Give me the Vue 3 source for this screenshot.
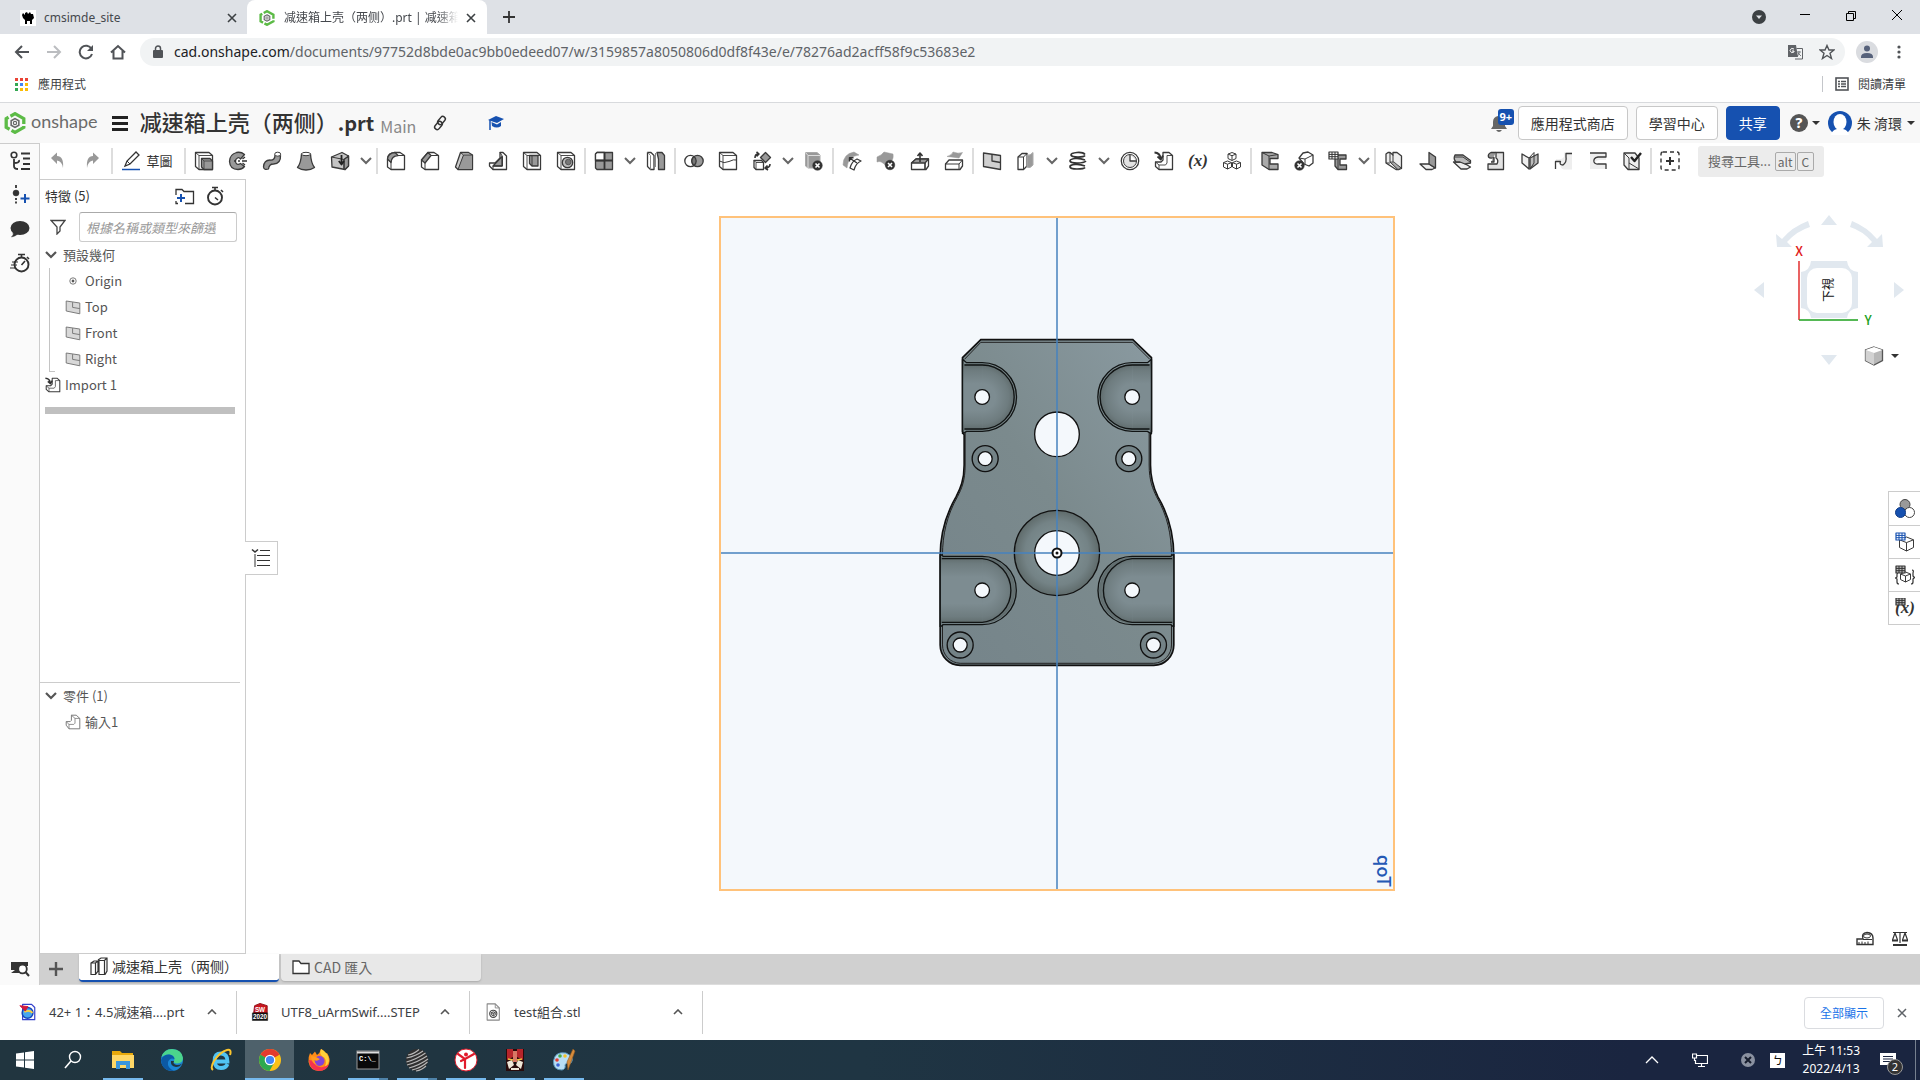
<script setup>
import { ref } from 'vue'

const K = '#3a3a3a'
const G = '#999'
const L = '#e2e2e2'
const p = (d, fill = 'none', stroke = K, w = 1.3) =>
  `<path d="${d}" fill="${fill}" stroke="${stroke}" stroke-width="${w}" stroke-linejoin="round"/>`
const c = (x, y, r, fill = 'none', stroke = K, w = 1.3) =>
  `<circle cx="${x}" cy="${y}" r="${r}" fill="${fill}" stroke="${stroke}" stroke-width="${w}"/>`
const block = p('M1.5 1.5H15L18.5 4.5V18.5H5L1.5 15.5Z', '#fff') + p('M1.5 1.5L5 4.5H18.5M5 4.5V18.5', 'none', K, 0.9)
const cross = (x, y) => c(x, y, 4.8, '#333', '#333', 0.5) + p(`M${x - 2} ${y - 2}L${x + 2} ${y + 2}M${x + 2} ${y - 2}L${x - 2} ${y + 2}`, 'none', '#fff', 1.6)
const grid = (x, y, s = '#333', f = '#fff') =>
  p(`M${x} ${y}h9v7h-9z`, f, s, 1.2) + p(`M${x + 3} ${y}v7M${x + 6} ${y}v7M${x} ${y + 2.4}h9M${x} ${y + 4.7}h9`, 'none', s, 1)
const cube = (x, y, s, f = '#fff') =>
  p(`M${x} ${y - s}l${s} ${s * 0.4}v${s * 1.1}l${-s} ${s * 0.5}l${-s} ${-s * 0.5}v${-s * 1.1}z`, f, K, 1) +
  p(`M${x - s} ${y - s * 0.6}l${s} ${s * 0.4}l${s} ${-s * 0.4}M${x} ${y - s * 0.2}v${s * 1.2}`, 'none', K, 1)

const plane = p('M1.5 2.5L18.5 5V18.5L1.5 15Z', '#d8d8d8', '#777', 1.2) + p('M9.5 4V10.5L18.5 12', 'none', '#777', 1.2)
const partIcon = p('M8 1.5L14 1.5L18.5 5.5V18.5H5L1.5 14V9.5H6.5L8 8Z', '#fff', '#777', 1.2) + p('M1.5 9.5L5 13H11L12.5 11.5V5.5L18.5 5.5M12.5 5.5L8 1.5M5 13V18.5', 'none', '#777', 1)
const varX = `<text x="10" y="15" text-anchor="middle" font-family="Liberation Serif, serif" font-style="italic" font-weight="700" font-size="17" fill="#333">(x)</text>`
const importIcon = p('M9 1.5H15L18.5 4.5V18.5H5L1.5 15.5V11H7L9 9Z', '#fff') + p('M1.5 11L5 14H11.5L13 12V4.5H18.5M5 14V18.5', 'none', K, 0.9) + p('M0.5 1.5Q6 2 6.5 7M3.5 5.5L6.8 8.5L9 4.5', 'none', '#333', 1.8)

const tools = [
  { n: 'Extrude', s: block + p('M7.5 7.5H16L18.5 10V18.5H10L7.5 16Z', G) + p('M7.5 7.5L10 10H18.5M10 10V18.5', 'none', K, 0.8) },
  { n: 'Revolve', s: p('M16.5 3.5Q13 0.5 8.5 1.5Q1.5 3.5 1.5 10.5Q2 18.5 10 18.5Q14 18.5 16.5 15.5L12.5 12.5Q9.5 14.5 8 12Q6.5 8.5 9.5 7Q11 6 12.5 8Z', G) + p('M6 10H8M10 10H12M14 10H19M14.5 8L17 6M14.5 12L17 14', 'none', '#333', 1.3) },
  { n: 'Sweep', s: p('M1.5 16Q2 9 8 9Q13 9.5 13 4L18.5 4.5Q19 12.5 11.5 13Q7 13 6.5 18Q2 19.5 1.5 16Z', G) + `<ellipse cx="15.7" cy="3.2" rx="3" ry="2" fill="#fff" stroke="${K}"/>` },
  { n: 'Loft', s: p('M5.5 3H14.5Q15 12 18.5 16.5Q15 19 10 19Q5 19 1.5 16.5Q5 12 5.5 3Z', G) + `<ellipse cx="10" cy="3" rx="4.5" ry="1.7" fill="#fff" stroke="${K}"/>` },
  { n: 'Thicken', chev: 1, s: p('M1.5 6L12 1.5L18.5 5V15L15 18.5L2 16Z', '#c4c4c4') + p('M14 8.5L18.5 5V15L15 18.5L14 18Z', G) + p('M1.5 6L14 8.5L18.5 5M14 8.5V18.5', 'none', K, 1) + p('M11.5 4V13M8.8 10L11.5 13.5L14 10', 'none', '#222', 1.8), sep: 1 },
  { n: 'Fillet', s: p('M1.5 8Q2 2 9 1.5H14L18.5 4.5V18.5H5L1.5 16Z', '#fff') + p('M1.5 8Q2 2 9 1.5L12 4.5Q5.5 5 5 11.5Z', G) + p('M12 4.5H18.5M5 11V18.5', 'none', K, 1) },
  { n: 'Chamfer', s: p('M1.5 9L8 1.5H14L18.5 4.5V18.5H5L1.5 16Z', '#fff') + p('M1.5 9L8 1.5L11 4.5L5 12Z', G) + p('M11 4.5H18.5M5 12V18.5', 'none', K, 1) },
  { n: 'Draft', s: p('M1.5 16L6.5 1.5H14.5L18.5 4V18.5H4Z', '#ccc') + p('M9.5 4H18.5V18.5H4Z', G, K, 1) + p('M6.5 1.5L9.5 4', 'none', K, 1) },
  { n: 'Rib', s: p('M12 1.5H15L18.5 5V18.5H5L1.5 15V12H7L12 7Z', '#fff') + p('M5 15L14 5.5V15Z', G) + p('M12 1.5L14.5 5.5V15H5V18.5', 'none', K, 1) },
  { n: 'Shell', s: block + p('M7.5 4.5H16V15H10L7.5 12.5Z', G) + p('M10 4.5V15', 'none', K, 1) },
  { n: 'Hole', s: block + c(11.5, 11.5, 5.2, '#bbb') + c(12.3, 11, 2.8, '#777', '#555', 1), sep: 1 },
  { n: 'Linear pattern', chev: 1, s: p('M3 1.5H18.5V18.5H3L1.5 17V3Z', G) + p('M3 1.5H10.5V9.5H1.5V3Z', '#fff') + p('M10.5 1.5V18.5M1.5 9.5H18.5', 'none', '#333', 1.8) },
  { n: 'Mirror', s: p('M1.5 1.5H5L8 4.5V18.5H4.5L1.5 15.5Z', '#fff') + p('M11 1.5H16L18.5 4.5V18.5H12.5V8Z', G) + p('M1.5 1.5L4.5 4.5V18.5M9.5 2V16', 'none', '#888', 1), sep: 1 },
  { n: 'Boolean', s: c(6.5, 10, 5.7, '#fff') + c(13.5, 10, 5.7, G) + p('M10 5.5A5.7 5.7 0 0 1 10 14.5A5.7 5.7 0 0 1 10 5.5', '#777') },
  { n: 'Split', s: block + p('M1.5 10Q6 13 11 10.5T18.5 9', 'none', K, 1) },
  { n: 'Transform', chev: 1, s: p('M2 9.5H9.5L11.5 11.5V18.5H4L2 16.5Z', '#fff') + p('M2 9.5L4 11.5H11.5M4 11.5V18.5', 'none', K, 0.9) + p('M8.5 6.5L13.5 1.5L18.5 6.5L13.5 11.5Z', G) + p('M3 7Q3 3 6 3M4.5 0.8L7 3L4.5 5.3M18 13Q18 16.5 14 17M15.5 14.5L13 17L16 19', 'none', '#333', 1.6) },
  { n: 'Delete part', s: p('M1.5 1.5H13L16 4V17H4L1.5 15Z', G, '#aaa', 1) + p('M1.5 1.5L4 4.5H16M4 4.5V17', 'none', '#ddd', 1) + cross(13.5, 14.5), sep: 1 },
  { n: 'Modify fillet', s: p('M1 14Q1 3 12 1L17 4Q6 5 5 17Z', G, G, 0.5) + p('M8 17Q10 10 15 8L19 10Q14 12 12 19Z', '#fff') + p('M15 12L7.5 7M7.5 10.5V6.8H11.5', 'none', '#333', 1.4) },
  { n: 'Delete face', s: p('M1 6Q6 4 8 1L17 3Q18 7 15 11L10 15Q5 9 1 11Z', G, G, 0.5) + cross(14, 14) },
  { n: 'Move face', s: p('M1.5 12L6 8H18.5V15L16 18.5H1.5Z', '#fff') + p('M1.5 12L6 8H18.5L15 12Z', G) + p('M15 12V18M10 11V3M7.5 5L10 2L12.5 5', 'none', '#333', 1.6) },
  { n: 'Replace face', s: p('M3 5.5Q8 4 9 1Q14 3 18.5 1.5L15 7Q9 6 3 5.5Z', G, G, 0.5) + p('M1.5 13L5 9H18.5V15L16 18.5H1.5Z', '#fff') + p('M1.5 13H15L18.5 9M15 13V18', 'none', K, 1), sep: 1 },
  { n: 'Plane', s: p('M1.5 2L18.5 4.5V18.5L1.5 15.5Z', '#d0d0d0') + p('M10 3V10L18.5 11.5', 'none', K, 1.3) },
  { n: 'Frame', chev: 1, s: p('M2 6L6 2.5H11V15L7.5 18.5H2Z', '#fff') + p('M2 6H7.5L11 2.5M7.5 6V18', 'none', K, 1) + p('M11 4Q14 5 17 1.5V14Q14 18 11 16Z', G, '#aaa', 1) },
  { n: 'Helix', chev: 1, s: p('M17 3.5Q15 1 9 1.5Q3 2 3 4Q3.5 6 10 6Q16 6 17 4.5M17 9Q12 7 7 7.5Q2 8 2 10Q2.5 12 9 12Q16 12 18 10M17 15Q12 13 7 13.5Q1.5 14 2 16Q2.5 18 9 18Q16 18 17 16.5', 'none', '#333', 1.7) },
  { n: 'Curve', s: c(10, 10, 8.7, '#fff') + c(10, 10, 6.5, L, K, 1) + p('M10 3.5V10H16.5', '#fff', K, 1.3) },
  { n: 'Import', s: importIcon },
  { n: 'Variable', s: varX },
  { n: 'Configurations', s: cube(10, 5.5, 4) + cube(5.5, 14, 4) + cube(14.5, 14, 4), sep: 1 },
  { n: 'Sheet metal', s: p('M2 1.5H12L18 3.5V7.5H10V13H18V18.5H9L2 14Z', '#aaa') + p('M2 1.5L9 5V18.5M9 5L18 3.5', 'none', K, 1) },
  { n: 'Remove bend', s: p('M5 7L9 2L14 1L19 4V12L15 15L10 13Z', '#fff') + p('M5 7L11 8L19 4M11 8V13', 'none', K, 1) + cross(5.5, 14.5) },
  { n: 'Sheet metal table', chev: 1, s: p('M7 4H18V8H12V14H18.5V18.5H10L7 15Z', G) + p('M10 7V18', 'none', K, 1) + grid(1, 1), sep: 1 },
  { n: 'Flange', s: p('M2 3L4 1.5H6L9 4V1.5H13L17.5 5V17.5L15 18.5H12L2 12Z', '#eee') + p('M6 1.5V11L14 18.5M9 4V11.5L17.5 17M2 12H6', 'none', K, 1) + p('M6 11H10L17 17L14 18.5Z', '#aaa', K, 0.8) },
  { n: 'Hem', s: p('M2 13H11L17 17L14 18.5H8Z', '#eee') + p('M11 1.5L17.5 6V17L11 13Z', G) },
  { n: 'Tab', s: p('M1.5 11H10L18.5 16L15 18H9Z', '#eee') + p('M3 4H11L18.5 9.5V12L13 13L8 11H4Q1 8 3 4Z', '#bbb') + p('M3 6H11L18 11', 'none', K, 1) },
  { n: 'Joint', s: p('M10 1.5H17.5V18.5H2V13H11Q13 9 10 7Z', L) + p('M10 1.5H5Q1.5 3 2.5 6Q4 8 8 6.5V11H5', G) },
  { n: 'Corner', s: p('M2 3L9 7V18L2 12Z', '#eee') + p('M18 3L10 7V18L18 12Z', '#bbb') + p('M9 7L14 1.5V12L10 18', 'none', K, 1) },
  { n: 'Bend relief', s: p('M10 1.5H18V18.5H10Q5 18 7 11H2V8Q8 9 10 6Z', '#eee', 'none') + p('M18 2.5H12V6Q13 11 9 14Q5 14 6.5 10.5H1.5V18', 'none') },
  { n: 'Make joint', s: p('M2 2H18V9H11Q6 10 7 14H18V18H2Z', '#eee', 'none') + p('M2 2H18V6H10Q5 7 6 11Q7 13.5 10 13H18V18', 'none') },
  { n: 'Finish sheet metal', s: p('M2 2H13L17 7V18.5H6L2 14Z', '#eee') + p('M2 2L7 7V18M7 12L17 18', 'none', K, 1) + p('M9 6L12.5 10L19 2', 'none', '#222', 2.4), sep: 1 },
]

const rail = [
  { n: 'Features', s: p('M4 8V15Q4 18 8 18M4 12Q10 12 9 9', 'none', '#333', 1.8) + c(4, 4, 2.8, '#fff', '#333', 1.6) + p('M11 2.5H20M13 7.5H20M13 13H20M11 18H20', 'none', '#333', 1.8) },
  { n: 'Insert version', s: c(6, 8, 3, '#333', '#333', 0.5) + p('M6 0V3M6 13V15M6 16.5V18.5', 'none', '#333', 1.8) + p('M15 9V18M10.5 13.5H19.5', 'none', '#1651b0', 2) },
  { n: 'Comments', s: `<ellipse cx="10" cy="9" rx="9.5" ry="7" fill="#333"/>` + p('M3 13Q4 16 1.5 18Q6 17 9 14Z', '#333', '#333', 0.5) },
  { n: 'History', s: c(11.5, 11.5, 7, '#fff', '#333', 1.9) + p('M8 1.5H15M11.5 1.5V4M17 4L19 6M11.5 12L15 8', 'none', '#333', 1.6) + p('M2 9H8M1 12H7M0 15H6', 'none', '#333', 1.2) },
]

const tree = [
  { t: 'Origin', s: c(10, 10, 4, 'none', '#777', 1.2) + c(10, 10, 1.5, '#555', '#555', 0.5) },
  { t: 'Top', s: plane }, { t: 'Front', s: plane }, { t: 'Right', s: plane },
]

const side = [
  { n: 'Appearance', s: c(10, 5.5, 5, '#999', '#444', 1) + c(14.5, 13.5, 5, '#fff', '#444', 1) + c(5.5, 13.5, 5, '#1651b0', '#123c85', 1) },
  { n: 'Part properties', s: cube(11.5, 12, 7) + grid(1, 1, '#1651b0') },
  { n: 'Configuration properties', s: cube(10.5, 12, 5) + p('M3 8Q2 8 2 10V12L0.5 13L2 14V17Q2 19 4 19M17 5Q19 5 18 8V11L19.5 12.5L18 14V17Q18 19 16 19', 'none', '#333', 1.2) + grid(1, 1, '#333', '#bbb') },
  { n: 'Variables', s: varX + grid(1, 0, '#333', '#bbb') },
]

const downloads = [
  { t: '42+ 1：4.5减速箱....prt', s: p('M4 1.5H14L17.5 5V18.5H4Z', '#fff', '#3340cc', 1.3) + c(9.5, 11, 6, '#48a6ed', '#1645b8', 1.6) + p('M6 10Q12 7 15 11', 'none', '#ffd23c', 2) + p('M1 3L10 4L7 9Z', '#d3183a', '#d3183a', 1) },
  { t: 'UTF8_uArmSwif....STEP', s: p('M4 3L10 0.5L18 3V11H3Z', '#c9151e', '#8f0d14', 1) + p('M1.5 11H18.5V19.5H1.5Z', '#111', '#111', 0.5) + '<text x="10" y="9.5" text-anchor="middle" font-family="Liberation Sans, sans-serif" font-weight="700" font-size="7" fill="#fff">SW</text><text x="10" y="18" text-anchor="middle" font-family="Liberation Sans, sans-serif" font-weight="700" font-size="7" fill="#fff">2020</text>' },
  { t: 'test組合.stl', s: p('M3.5 1H12.5L17 5.5V19H3.5Z', '#fff', '#888', 1.2) + p('M12.5 1V5.5H17', 'none', '#888', 1) + c(10.3, 12, 4, '#fff', '#444', 1.2) + cube(10.3, 12, 2.2) },
]

const tasks = [
  { n: 'Start', s: '<path d="M3 5.5L11 4.4V11.500H3ZM12 4.2L21 3V11.500H12ZM3 12.500H11V19.600L3 18.500ZM12 12.500H21V21L12 19.800Z" fill="#fff"/>' },
  { n: 'Search', s: '<circle cx="13" cy="9" r="5.5" fill="none" stroke="#fff" stroke-width="1.4"/><path d="M9 13L3 20" stroke="#fff" stroke-width="1.6"/>' },
  { n: 'File Explorer', on: 1, s: '<path d="M1 3H9L11 5H22V19H1Z" fill="#e8a90c"/><path d="M1 7H23V20H1Z" fill="#ffd766"/><path d="M5 21V13H19V21H15V17H9V21Z" fill="#3a96dd"/>' },
  { n: 'Edge', s: '<circle cx="12" cy="12" r="11" fill="#1b87d6"/><path d="M1.5 9Q4 1 12 1Q22 1.5 23 10Q23 15 17 15.5Q13 15 14 13Q16 8 10 6.5Q5 6 1.5 9Z" fill="#4bd48c"/><path d="M1 12Q3 6.5 9 6.5Q14 7 14.5 11Q10 9 8 14Q7 20 14 22.8Q2 24 1 12Z" fill="#0c59a4"/><path d="M14 13Q12 16 17 17Q20 17 22 15.5Q20 19 16 19Q10 18 11 13Z" fill="#21353f"/>' },
  { n: 'Internet Explorer', s: '<path d="M6 13.5H18.5Q18.5 5.5 12 5.5Q5.5 5.5 5.5 13Q6 20 12 20Q17 20 18.5 16" fill="none" stroke="#51c4f3" stroke-width="3.8"/><path d="M4 22Q1 20 5 13Q11 4 18 2Q23 1 21 7" fill="none" stroke="#fbc52d" stroke-width="2"/>' },
  { n: 'Chrome', on: 1, wide: 1, s: '<circle cx="12" cy="12" r="11" fill="#fbc116"/><path d="M12 12L2.5 6.5A11 11 0 0 1 21.5 6.5Z" fill="#e33b2e"/><path d="M12 12L2.5 6.5A11 11 0 0 0 11.5 23L16.5 14Z" fill="#2da94f"/><path d="M12 6.5H21.5L12 12L2.5 6.5Z" fill="#e33b2e"/><circle cx="12" cy="12" r="5.3" fill="#fff"/><circle cx="12" cy="12" r="4.1" fill="#4285f4"/>' },
  { n: 'Firefox', s: '<path d="M3 5L5 7L8 3.5L10 7Q13 5 14 1Q17 2 18 6L20 5Q24 11 22 16Q19 23 12 23Q3 22.5 1.5 14Q1 9 3 5Z" fill="#ff8a16"/><path d="M14 1Q22 5 22 13Q21 17 18 19Q21 11 15 8Q12 6 14 1Z" fill="#ffcf3a"/><path d="M2 12Q2 22 12 23Q20 23 22 16Q18 20 13 19Q7 18 7 13Z" fill="#f5334f"/><circle cx="12.5" cy="13" r="5" fill="#8143d8"/><path d="M4 8Q8 8 13 11Q10 14 7 12Q8 15 10 17Q4 15 4 8Z" fill="#ff9b20"/>' },
  { n: 'Command Prompt', on: 1, multi: 1, s: '<rect x="1" y="3" width="22" height="18" fill="#090909" stroke="#999"/><path d="M1 3.5H23V5.5H1Z" fill="#ddd"/><text x="3" y="13" font-family="Liberation Mono, monospace" font-size="7" font-weight="700" fill="#fff">C:\\_</text>' },
  { n: 'Globe', on: 1, multi: 1, s: '<circle cx="12" cy="12" r="11" fill="#303030"/><path d="M3 7Q9 6 14 1.5M1.5 10Q11 8 18 3M1.5 14Q12 11 20.500 5M2 17Q13 14 22 8M4 20Q15 17 23 11M7 22Q16 20 22.500 14M11 23Q17 22 21 18" fill="none" stroke="#b8b8b8" stroke-width="1.1"/>' },
  { n: 'Draft tool', on: 1, s: '<circle cx="12" cy="12" r="11" fill="#fff" stroke="#dd1d2c"/><path d="M4 6L11 11V20M20 6L11 11M11 11L7 13" stroke="#e11b2c" stroke-width="2.200" fill="none" stroke-linecap="round"/><circle cx="12" cy="6.5" r="2" fill="#e11b2c"/>' },
  { n: 'Lion', on: 1, s: '<path d="M3 1H21V23H3Z" fill="#280b0b"/><path d="M4 1H10V9L4 12ZM14 1H20V12L14 9Z" fill="#b6252b"/><path d="M10 3H14V15H10Z" fill="#d87764"/><path d="M4 14L9 12L11 17L6 21ZM20 14L15 12L13 17L18 21ZM8 20H16V22H8Z" fill="#eee6d7"/><path d="M5 11L10 12M19 11L14 12" stroke="#f2c341" stroke-width="1.5"/><path d="M10 14H14L12 17Z" fill="#111"/>' },
  { n: 'Paint', on: 1, s: '<path d="M14 5Q3 3 1.5 13Q1 22 10 22Q14 21 13 17Q14 14 18 16Q22 12 19 8Z" fill="#b9def5" stroke="#5b98bd"/><circle cx="5" cy="12" r="1.8" fill="#e23c30"/><circle cx="8" cy="8" r="1.8" fill="#4aa948"/><circle cx="13" cy="8" r="1.8" fill="#f4c028"/><circle cx="6" cy="17" r="1.8" fill="#3b62d5"/><path d="M21 1L23 3L19 14L16 22L15 14Z" fill="#d68b3c" stroke="#8f571d" stroke-width="0.6"/>' },
]

const filter = ref('')
const holes = [[185, 231, 22], [635, 231, 22], [185, 811, 22], [635, 811, 22]]
const bosses = [[194, 416], [625, 416], [119, 975], [699, 975]]
// Pocket: outer wall x, arc centre x, arc centre y
const pockets = [[126, 185, 231, 1], [693, 635, 231, 0], [60, 185, 811, 1], [760, 635, 811, 0]]
const onshapeMark = '<path d="M10 1.5L18 6V14L10 18.5L2 14V6Z" fill="none" stroke="#5cbb46" stroke-width="3" stroke-dasharray="14 2"/><path d="M10 6L13.5 8V12L10 14L6.5 12V8Z" fill="none" stroke="#666" stroke-width="1.4"/><circle cx="10" cy="10" r="1.5" fill="none" stroke="#666"/>'
</script>

<template>
  <div class="screen">
    <!-- Browser tab strip -->
    <div class="tabs">
      <div class="tab idle">
        <svg class="fav" viewBox="0 0 16 16"><rect width="16" height="16" fill="#fff" /><path d="M2 5L3 3L5 5V3L7 2L8 4L10 2L11 4H13L14 8L12 10V14H10V11H7V14H5V10L3 8Z" fill="#000" /></svg>
        <span class="tab-title">cmsimde_site</span>
        <button class="plain x" aria-label="Close tab"><svg viewBox="0 0 10 10"><path d="M1 1L9 9M9 1L1 9" stroke="#3c4043" stroke-width="1.6" /></svg></button>
      </div>
      <div class="tab active">
        <svg class="fav" viewBox="0 0 20 20" v-html="onshapeMark" />
        <span class="tab-title fade">减速箱上壳（两侧）.prt | 减速箱</span>
        <button class="plain x" aria-label="Close tab"><svg viewBox="0 0 10 10"><path d="M1 1L9 9M9 1L1 9" stroke="#3c4043" stroke-width="1.6" /></svg></button>
      </div>
      <button class="plain newtab" aria-label="New tab"><svg viewBox="0 0 14 14"><path d="M7 1V13M1 7H13" stroke="#333" stroke-width="1.8" /></svg></button>
      <div class="win">
        <button class="plain" aria-label="Search tabs"><svg viewBox="0 0 14 14"><circle cx="7" cy="7" r="7" fill="#3c4043" /><path d="M4 5.5H10L7 9Z" fill="#dee1e6" /></svg></button>
        <button class="plain" aria-label="Minimize"><svg viewBox="0 0 14 14"><path d="M2 4.5H12" stroke="#000" /></svg></button>
        <button class="plain" aria-label="Restore"><svg viewBox="0 0 14 14"><path d="M2.5 3.5H9.5V10.5H2.5ZM4.5 3V1.5H11.5V8.5H10" fill="none" stroke="#000" /></svg></button>
        <button class="plain" aria-label="Close"><svg viewBox="0 0 14 14"><path d="M2 0L12 10M12 0L2 10" stroke="#000" /></svg></button>
      </div>
    </div>

    <!-- Address bar -->
    <div class="nav">
      <button class="plain" aria-label="Back"><svg viewBox="0 0 16 16"><path d="M15 8H2M8 2L2 8L8 14" fill="none" stroke="#505357" stroke-width="2" /></svg></button>
      <button class="plain" aria-label="Forward"><svg viewBox="0 0 16 16"><path d="M1 8H14M8 2L14 8L8 14" fill="none" stroke="#bbbdc0" stroke-width="2" /></svg></button>
      <button class="plain" aria-label="Reload"><svg viewBox="0 0 16 16"><path d="M13.5 5A6.3 6.3 0 1 0 14 10" fill="none" stroke="#505357" stroke-width="2" /><path d="M15 1V7H9Z" fill="#505357" /></svg></button>
      <button class="plain" aria-label="Home"><svg viewBox="0 0 16 16"><path d="M1 8.5L8 2L15 8.5M3.5 7V14.5H12.5V7" fill="none" stroke="#505357" stroke-width="2" /></svg></button>
      <div class="omni">
        <svg class="lock" viewBox="0 0 12 14"><rect x="1" y="5" width="10" height="8" rx="1" fill="#505357" /><path d="M3.5 6V3.5A2.5 2.5 0 0 1 8.5 3.5V6" fill="none" stroke="#505357" stroke-width="1.5" /></svg>
        <a class="url" href="#"><b>cad.onshape.com</b>/documents/97752d8bde0ac9bb0edeed07/w/3159857a8050806d0df8f43e/e/78276ad2acff58f9c53683e2</a>
        <button class="plain" aria-label="Translate"><svg viewBox="0 0 16 16"><path d="M1 1H9L11 13H1Z" fill="#606367" /><path d="M9.5 4.5H15.5V15H8" fill="none" stroke="#606367" /><path d="M7 5Q4 3 3 6.5Q4 10 7 8V7H5" fill="none" stroke="#fff" /><path d="M10 8H14M12 7V8Q13 11 10 12M11 9L14 12" fill="none" stroke="#606367" stroke-width="0.8" /></svg></button>
        <button class="plain star" aria-label="Bookmark"><svg viewBox="0 0 16 16"><path d="M8 1.5L10 6H15L11 9.3L12.5 14.5L8 11.5L3.5 14.5L5 9.3L1 6H6Z" fill="none" stroke="#505357" stroke-width="1.4" /></svg></button>
      </div>
      <button class="plain user" aria-label="Profile"><svg viewBox="0 0 22 22"><circle cx="11" cy="11" r="11" fill="#dadce0" /><circle cx="11" cy="7.5" r="3" fill="#56617a" /><path d="M5 16Q5 12 11 12Q17 12 17 16V17H5Z" fill="#56617a" /></svg></button>
      <button class="plain dots" aria-label="Menu"><svg viewBox="0 0 16 16"><g fill="#505357"><circle cx="8" cy="3" r="1.6" /><circle cx="8" cy="8" r="1.6" /><circle cx="8" cy="13" r="1.6" /></g></svg></button>
    </div>

    <!-- Bookmarks -->
    <div class="marks">
      <a href="#"><svg class="apps" viewBox="0 0 13 13"><path d="M0 0h3v3H0zM5 0h3v3H5zM10 0h3v3h-3z" fill="#ea4335" /><path d="M0 5h3v3H0zM0 10h3v3H0z" fill="#34a853" /><path d="M5 5h3v3H5z" fill="#4285f4" /><path d="M10 5h3v3h-3zM5 10h3v3H5zM10 10h3v3h-3z" fill="#fbbc05" /></svg>應用程式</a>
      <a class="reading" href="#"><svg viewBox="0 0 14 14"><rect x="1" y="1" width="12" height="12" fill="none" stroke="#505357" stroke-width="1.6" /><path d="M3 4.5H5M6 4.5H11M3 7H5M6 7H11M3 9.5H5M6 9.5H11" stroke="#505357" stroke-width="1.3" /></svg>閱讀清單</a>
    </div>

    <!-- Document header -->
    <header class="doc">
      <svg class="mark" viewBox="0 0 20 20" v-html="onshapeMark" />
      <span class="brand">onshape</span>
      <button class="plain burger" aria-label="Menu"><i /><i /><i /></button>
      <h1>减速箱上壳（两侧）<b>.prt</b></h1>
      <span class="branch">Main</span>
      <button class="plain link" aria-label="Copy link"><svg viewBox="0 0 16 16"><g fill="none" stroke="#333" stroke-width="1.5"><rect x="7" y="1" width="5" height="9" rx="2.5" transform="rotate(40 9.5 5.5)" /><rect x="4" y="6" width="5" height="9" rx="2.5" transform="rotate(40 6.5 10.5)" /></g></svg></button>
      <button class="plain cap" aria-label="Learning"><svg viewBox="0 0 16 16"><path d="M0 5L8 1L16 4L9 8Z" fill="#1651b0" /><path d="M3.5 7L9 9.5L13 7V11Q9 14 4 11Z" fill="#1651b0" /><path d="M2 5V15" stroke="#1651b0" stroke-width="1.5" /></svg></button>
      <div class="account">
        <button class="plain bell" aria-label="Notifications"><svg viewBox="0 0 18 20"><path d="M1 16L3 13V9Q3 4 8 3Q9 0 10 3Q15 4 15 9V13L17 16ZM6 17H12Q9 21 6 17Z" fill="#666" /></svg><span>9+</span></button>
        <button class="box store">應用程式商店</button>
        <button class="box learn">學習中心</button>
        <button class="box share">共享</button>
        <button class="plain help" aria-label="Help"><svg viewBox="0 0 18 18"><circle cx="9" cy="9" r="9" fill="#555" /><text x="9" y="14" text-anchor="middle" font-family="Noto Sans, sans-serif" font-size="14" font-weight="800" fill="#fff">?</text></svg><i class="caret" /></button>
        <button class="plain me"><svg viewBox="0 0 24 24"><circle cx="12" cy="12" r="12" fill="#1651b0" /><ellipse cx="12" cy="11" rx="6.5" ry="8" fill="#fff" /><path d="M3 24Q4 19 9 18V14H15V18Q20 19 21 24Z" fill="#fff" /></svg>朱 淯環<i class="caret" /></button>
      </div>
    </header>

    <!-- Workspace -->
    <div class="work">
      <nav class="rail">
        <button v-for="r in rail" :key="r.n" class="plain" :aria-label="r.n"><svg viewBox="0 0 20 20" v-html="r.s" /></button>
        <button class="plain find" aria-label="Search tabs"><svg viewBox="0 0 20 16"><path d="M1 1H18V5H14Q8 5 9 12H1L5 9H1Z" fill="#333" /><circle cx="12.5" cy="8" r="4.3" fill="#fff" stroke="#333" stroke-width="1.8" /><path d="M15.5 11L19 15" stroke="#333" stroke-width="2" /></svg></button>
      </nav>
      <div class="main">
        <div class="toolbar">
          <button class="plain tool" aria-label="Undo"><svg viewBox="0 0 20 20"><path d="M3 7L9 1.5V5Q16 5 15 17Q14 10 9 9.5V13Z" fill="#999" /></svg></button>
          <button class="plain tool" aria-label="Redo"><svg viewBox="0 0 20 20"><path d="M17 7L11 1.5V5Q4 5 5 17Q6 10 11 9.5V13Z" fill="#999" /></svg></button>
          <i class="sep first" />
          <button class="plain sketch"><svg viewBox="0 0 20 20"><path d="M3 15L5 10L14 1L17 4L8 13Z" fill="none" stroke="#333" stroke-width="1.3" /><path d="M5 10L8 13" stroke="#333" /><path d="M0 18.5H18" stroke="#1651b0" stroke-width="1.5" /></svg>草圖</button>
          <i class="sep" />
          <template v-for="t in tools" :key="t.n">
            <button class="plain tool" :aria-label="t.n"><svg viewBox="0 0 20 20" v-html="t.s" /></button>
            <button v-if="t.chev" class="plain chev" :aria-label="t.n + ' options'"><svg viewBox="0 0 12 8"><path d="M1 1L6 6L11 1" fill="none" stroke="#666" stroke-width="2" /></svg></button>
            <i v-if="t.sep" class="sep" />
          </template>
          <button class="plain tool" aria-label="Add custom features"><svg viewBox="0 0 20 20"><rect x="1" y="1" width="18" height="18" rx="2" fill="none" stroke="#333" stroke-width="1.4" stroke-dasharray="4 3" /><path d="M10 6V14M6 10H14" stroke="#333" stroke-width="2" /></svg></button>
          <button class="plain search">搜尋工具...<span><kbd>alt</kbd><kbd>C</kbd></span></button>
        </div>

        <div class="body">
          <aside class="panel">
            <section class="features">
              <div class="phead">
                <span>特徵 (5)</span>
                <button class="plain" aria-label="New folder"><svg viewBox="0 0 20 20"><path d="M1 9V3.5H7L9 5.5H18.5V17.5H10M1 15V17.5H3" fill="none" stroke="#333" stroke-width="1.3" /><path d="M6 8V16M2 12H10" stroke="#1651b0" stroke-width="2" /></svg></button>
                <button class="plain" aria-label="Regeneration times"><svg viewBox="0 0 20 20"><circle cx="10" cy="11.5" r="7" fill="none" stroke="#333" stroke-width="1.9" /><path d="M7 1.5H13M10 1.5V4M16 4L18 6M10 11.5L13 14" stroke="#333" stroke-width="1.6" /></svg></button>
              </div>
              <div class="filter">
                <svg viewBox="0 0 16 16"><path d="M1 1.5H15L10 8V12L7 15V8Z" fill="none" stroke="#444" stroke-width="1.3" /></svg>
                <input v-model="filter" type="text" aria-label="Filter" placeholder="根據名稱或類型來篩選">
              </div>
              <div class="row group"><svg class="fold" viewBox="0 0 12 8"><path d="M1 1L6 6L11 1" fill="none" stroke="#555" stroke-width="2.2" /></svg>預設幾何</div>
              <div class="kids">
                <div v-for="t in tree" :key="t.t" class="row kid"><svg viewBox="0 0 20 20" v-html="t.s" />{{ t.t }}</div>
              </div>
              <div class="row imp"><svg viewBox="0 0 20 20" v-html="importIcon" />Import 1</div>
              <div class="bar" />
            </section>
            <section class="parts">
              <div class="row group"><svg class="fold" viewBox="0 0 12 8"><path d="M1 1L6 6L11 1" fill="none" stroke="#555" stroke-width="2.2" /></svg>零件 (1)</div>
              <div class="row part"><svg viewBox="0 0 20 20" v-html="partIcon" />输入1</div>
            </section>
            <button class="plain flyout" aria-label="Toggle list"><svg viewBox="0 0 20 20"><path d="M9 2.5H19M6 7.5H19M6 12.5H19M6 17.5H19" stroke="#333" stroke-width="1.2" /><path d="M4 6V19" stroke="#999" stroke-width="2" /><path d="M1 1.5L4 4L7 1.5" fill="none" stroke="#333" stroke-width="1.6" /></svg></button>
          </aside>

          <main class="canvas">
            <svg class="model" viewBox="0 0 676 676">
              <defs>
                <linearGradient id="metal" x1="0" y1="1" x2="1" y2="0"><stop offset="0" stop-color="#75848a" /><stop offset=".5" stop-color="#7b8a8d" /><stop offset="1" stop-color="#8b9ba2" /></linearGradient>
                <radialGradient v-for="(k, i) in pockets" :id="'arc' + i" :key="'a' + i" gradientUnits="userSpaceOnUse" :cx="k[1]" :cy="k[2]" r="99"><stop offset=".4" stop-color="#7d8c91" /><stop offset=".8" stop-color="#6e7c7f" /><stop offset="1" stop-color="#5f6b6c" /></radialGradient>
                <linearGradient id="trough" x1="0" y1="0" x2="0" y2="1"><stop offset="0" stop-color="#5f6b6c" /><stop offset=".1" stop-color="#6e7c7f" /><stop offset=".3" stop-color="#7d8c91" /><stop offset=".7" stop-color="#7d8c91" /><stop offset=".9" stop-color="#6e7c7f" /><stop offset="1" stop-color="#5f6b6c" /></linearGradient>
                <radialGradient id="bore"><stop offset=".5" stop-color="#7b8b8e" /><stop offset=".75" stop-color="#748386" /><stop offset="1" stop-color="#5f6b6b" /></radialGradient>
              </defs>
              <rect x="1" y="1" width="674" height="673" fill="#f4f8fc" stroke="#ffc27a" stroke-width="2" />
              <g transform="translate(201.5 104) scale(.3333)">
                <path d="M181 59H637L693 113V335L690 345V435C690 480 700 505 712 530C745 585 760 640 760 710V975A60 61 0 0 1 700 1036H119A60 61 0 0 1 59 975V710C59 640 75 585 107 530C120 505 131 480 131 435V345L126 335V113Z" fill="url(#metal)" stroke="#111" stroke-width="5" />
                <path d="M181 67H637L688 118M132 118L181 67M686 338V435C686 482 697 507 708 530C741 587 753 645 753 706M753 914V975A55 55 0 0 1 700 1030H119A55 55 0 0 1 66 975V914M66 706C66 645 79 587 111 530C123 507 134 482 134 435V338" fill="none" stroke="#222" stroke-width="3" />
                <template v-for="(k, i) in pockets" :key="'p' + i">
                  <rect :x="Math.min(k[0], k[1])" :y="k[2] - 99" :width="Math.abs(k[0] - k[1]) + 1" height="198" fill="url(#trough)" />
                  <path :d="`M${k[1]} ${k[2] - 99}A99 99 0 0 ${k[3]} ${k[1]} ${k[2] + 99}Z`" :fill="`url(#arc${i})`" />
                </template>
                <g fill="none" stroke="#111414" stroke-width="4">
                  <path d="M126 118L138 128H185A102 102 0 0 1 185 334H138L126 342M132 135H185A96 96 0 0 1 185 327H132M126 118V342" />
                  <path d="M693 118L681 128H635A102 102 0 0 0 635 334H681L693 342M687 135H635A96 96 0 0 0 635 327H687M693 118V342" />
                  <path d="M59 702L68 709H185A102 102 0 0 1 185 914H68L59 921M64 716H185A96 96 0 0 1 185 907H64M59 702V921" />
                  <path d="M760 702L751 709H635A102 102 0 0 0 635 914H751L760 921M755 716H635A96 96 0 0 0 635 907H755M760 702V921" />
                </g>
                <g stroke="#111" stroke-width="4">
                  <circle cx="409.5" cy="699" r="128" fill="url(#bore)" />
                  <circle cx="409.5" cy="699" r="67" fill="#f4f8fc" />
                  <circle cx="409.5" cy="343" r="67" fill="#f4f8fc" />
                  <circle v-for="h in holes" :key="h.join()" :cx="h[0]" :cy="h[1]" :r="h[2]" fill="#f4f8fc" />
                  <template v-for="b in bosses" :key="b.join()">
                    <circle :cx="b[0]" :cy="b[1]" r="39" fill="#738286" />
                    <circle :cx="b[0]" :cy="b[1]" r="21" fill="#f4f8fc" />
                  </template>
                </g>
              </g>
              <path d="M338 2V673M2 337H674" stroke="#4682be" stroke-width="2" opacity=".75" />
              <circle cx="338" cy="337" r="4.5" fill="#fff" stroke="#111" stroke-width="2" /><circle cx="338" cy="337" r="1.5" fill="#111" />
              <text transform="matrix(0 -1 -1 0 658 671)" font-family="Noto Sans CJK TC, sans-serif" font-size="18" font-weight="500" fill="#2559b5">Top</text>
            </svg>

            <svg class="viewcube" viewBox="0 0 150 166">
              <g fill="#e1e8ef">
                <path d="M74 5L82 15H66ZM74 155L66 145H82ZM-1 80L9 72V88ZM149 80L139 72V88Z" />
                <path d="M21 25L22 38L37 38L32 33Q42 22 55 18L53 12Q37 18 27 30ZM127 25L128 38L112 38L117 33Q108 22 95 18L97 12Q112 18 122 30Z" transform="translate(0 -1)" />
                <path d="M56 51H92Q93 61 103 62V98Q93 99 92 108H56Q55 99 46 98V62Q55 61 56 51Z" />
              </g>
              <rect x="52" y="58" width="45" height="45" rx="10" fill="#fff" />
              <path d="M44 51V110" stroke="#e02020" stroke-width="1.4" /><path d="M44 110H103" stroke="#1ca01c" stroke-width="1.4" />
              <text x="44" y="46" text-anchor="middle" font-family="Noto Sans CJK TC, sans-serif" font-size="13" font-weight="500" fill="#e02020">X</text>
              <text x="113" y="115" text-anchor="middle" font-family="Noto Sans CJK TC, sans-serif" font-size="13" font-weight="500" fill="#1ca01c">Y</text>
              <text transform="translate(78 92) rotate(-90)" font-family="Noto Sans CJK TC, sans-serif" font-size="12" fill="#111">下視</text>
            </svg>
            <button class="plain shade" aria-label="View options"><svg viewBox="0 0 20 20"><path d="M10 1L18.5 4V14.5L10 19L1.5 14.5V4Z" fill="#b8b8b8" stroke="#555" stroke-width="1.3" /><path d="M1.5 4L10 7V19L1.5 14.5Z" fill="#d2d2d2" /><path d="M10 1L18.5 4L10 7L1.5 4Z" fill="#fff" /></svg><i class="caret" /></button>

            <div class="palette">
              <button v-for="s in side" :key="s.n" class="plain" :aria-label="s.n"><svg viewBox="0 0 20 20" v-html="s.s" /></button>
            </div>
            <div class="measure">
              <button class="plain" aria-label="Measure"><svg viewBox="0 0 18 16"><path d="M1 8H7Q5 2 11 1.5Q17 2 17 7V13.5H1Z" fill="#fff" stroke="#333" stroke-width="1.4" /><ellipse cx="11" cy="5" rx="3.5" ry="2" fill="none" stroke="#333" /><path d="M3 13V11M6 13V10.5M9 13V11M12 13V10.5M7 8.5H16" stroke="#333" /></svg></button>
              <button class="plain" aria-label="Mass properties"><svg viewBox="0 0 18 16"><path d="M2 1.5H16M9 1.5V12M4 2L1.5 9M4 2L6.5 9M14 2L11.5 9M14 2L16.5 9" fill="none" stroke="#333" stroke-width="1.2" /><path d="M1 9.5H7M11 9.5H17M2 14H16" stroke="#333" stroke-width="2" /></svg></button>
            </div>
          </main>
        </div>

        <div class="doctabs">
          <button class="plain add" aria-label="Add tab"><svg viewBox="0 0 16 16"><path d="M8 1V15M1 8H15" stroke="#555" stroke-width="2.4" /></svg></button>
          <button class="plain dt on"><svg viewBox="0 0 18 18"><path d="M1 6L4 4H8V14L5.5 17.5H1ZM8 3L11 1H17V14L15 17.5H9V3.5H14.5L17 1M14.5 3.5V17M1 6H5.5L8 4M5.5 6V17" fill="none" stroke="#333" stroke-width="1.2" /></svg>减速箱上壳（两侧）</button>
          <button class="plain dt"><svg viewBox="0 0 18 18"><path d="M1 3H7L9 5.5H17V15.5H1Z" fill="#fff" stroke="#333" stroke-width="1.3" /></svg>CAD 匯入</button>
        </div>
      </div>
    </div>

    <!-- Download shelf -->
    <div class="shelf">
      <div v-for="d in downloads" :key="d.t" class="dl">
        <svg class="file" viewBox="0 0 20 20" v-html="d.s" /><a href="#">{{ d.t }}</a>
        <button class="plain" aria-label="File options"><svg viewBox="0 0 10 6"><path d="M1 5L5 1L9 5" fill="none" stroke="#555" stroke-width="1.6" /></svg></button>
      </div>
      <button class="box all">全部顯示</button>
      <button class="plain sx" aria-label="Close shelf"><svg viewBox="0 0 10 10"><path d="M1 1L9 9M9 1L1 9" stroke="#5f6368" stroke-width="1.5" /></svg></button>
    </div>

    <!-- Taskbar -->
    <footer class="task">
      <button v-for="t in tasks" :key="t.n" class="plain app" :class="{ on: t.on, wide: t.wide, multi: t.multi }" :aria-label="t.n"><svg viewBox="0 0 24 24" v-html="t.s" /></button>
      <div class="tray">
        <button class="plain" aria-label="Hidden icons"><svg viewBox="0 0 16 16"><path d="M2 11L8 5L14 11" fill="none" stroke="#fff" stroke-width="1.3" /></svg></button>
        <button class="plain" aria-label="Network"><svg viewBox="0 0 16 16"><path d="M5 3.5H15.5V11.5H3.5V8M9.5 11.5V14.5M6 14.5H13" fill="none" stroke="#fff" stroke-width="1.2" /><path d="M.5 2H4.5V6H.5ZM2.5 6V9" fill="none" stroke="#fff" stroke-width="1.2" /></svg></button>
        <button class="plain" aria-label="Status"><svg viewBox="0 0 16 16"><circle cx="8" cy="8" r="7" fill="#8a91a0" /><path d="M5 5L11 11M11 5L5 11" stroke="#151c2c" stroke-width="2" /></svg></button>
        <button class="plain ime">ㄅ</button>
        <time><span>上午 11:53</span><span>2022/4/13</span></time>
        <button class="plain note" aria-label="Notifications"><svg viewBox="0 0 16 16"><path d="M0 1H16V13H11L8 16V13H0Z" fill="#fff" /><path d="M3 4.5H13M3 7H13M3 9.5H10" stroke="#1a2540" /></svg><span>2</span></button>
        <i class="peek" />
      </div>
    </footer>
  </div>
</template>

<style>
body { margin: 0; background: #fff; }
</style>

<style scoped>
* { box-sizing: border-box; }
.screen { display: flex; flex-direction: column; min-height: 100vh; width: 100%; overflow: hidden; color: #333; font: 13px/20px "Noto Sans CJK TC", sans-serif; }
.plain { display: flex; align-items: center; justify-content: center; flex: none; padding: 0; border: 0; background: none; color: inherit; font: inherit; white-space: nowrap; }
svg { display: block; flex: none; }
a { color: inherit; text-decoration: none; }

.tabs { display: flex; height: 34px; background: #dee1e6; font: 12px/18px "Noto Sans", "Noto Sans CJK TC", sans-serif; color: #45484d; }
.tab { display: flex; align-items: center; padding: 1px 10px 0 20px; }
.idle { width: 247px; }
.active { width: 240px; padding: 1px 11px 0 12px; border-radius: 8px 8px 0 0; background: #fff; }
.fav { width: 16px; height: 16px; margin-right: 8px; }
.active .fav { margin-right: 9px; }
.tab-title { flex: 1; min-width: 0; overflow: hidden; white-space: nowrap; }
.fade { -webkit-mask-image: linear-gradient(90deg, #000 88%, transparent); mask-image: linear-gradient(90deg, #000 88%, transparent); }
.x { width: 10px; margin-left: 8px; }
.x svg { width: 10px; height: 10px; }
.newtab { width: 44px; }
.newtab svg { width: 14px; height: 14px; }
.win { display: flex; margin-left: auto; }
.win button { width: 46px; }
.win svg { width: 14px; height: 14px; }

.nav { display: flex; align-items: center; height: 36px; padding: 0 11px 0 6px; }
.nav > .plain { width: 32px; height: 32px; }
.nav svg { width: 16px; height: 16px; }
.omni { display: flex; align-items: center; flex: 1; height: 28px; margin-left: 6px; padding: 0 10px 0 12px; border-radius: 14px; background: #f1f3f4; }
.nav .lock { width: 12px; height: 14px; margin-right: 10px; }
.url { flex: 1; font: 14px/20px "Noto Sans", sans-serif; color: #5f6368; white-space: nowrap; }
.url b { font-weight: 400; color: #202124; }
.star { margin-left: 16px; }
.nav .user { width: 44px; }
.nav .user svg { width: 22px; height: 22px; }
.nav .dots { width: 20px; }

.marks { display: flex; justify-content: space-between; height: 33px; padding: 2px 14px 6px 15px; border-bottom: 1px solid #d8dadd; font: 12px/16px "Noto Sans CJK TC", sans-serif; color: #3c4043; }
.marks a { display: flex; align-items: center; }
.apps { width: 13px; height: 13px; margin-right: 10px; }
.marks .reading { height: 16px; align-self: center; padding-left: 12px; border-left: 1px solid #c4c6ca; }
.reading svg { width: 14px; height: 14px; margin-right: 9px; }

.doc { display: flex; align-items: center; height: 40px; padding: 0 5px 0 4px; background: #f8f8f8; }
.mark { width: 22px; height: 22px; }
.brand { margin: 0 14px 4px 5px; font: 18px/24px Lato, sans-serif; color: #6b6b6b; }
.burger { flex-direction: column; gap: 3px; width: 16px; }
.burger i { width: 16px; height: 3px; background: #222; }
h1 { margin: 0 6px 2px 12px; font: 500 22px/32px "Noto Sans CJK TC", sans-serif; color: #333; white-space: nowrap; }
h1 b { font-size: 20px; font-weight: 700; }
.branch { padding-top: 5px; font-size: 16px; color: #888; }
.link { margin-left: 16px; }
.link svg, .cap svg { width: 16px; height: 16px; }
.cap { margin-left: 40px; }
.account { display: flex; align-items: center; gap: 8px; margin-left: auto; }
.box { height: 34px; padding: 0; border: 1px solid #c8c8c8; border-radius: 4px; background: #fff; color: #333; font: 14px/20px "Noto Sans CJK TC", sans-serif; }
.store { width: 110px; }
.learn { width: 82px; }
.account .share { width: 54px; border-color: #1651b0; background: #1651b0; color: #fff; }
.bell { position: relative; width: 24px; height: 34px; margin-right: -4px; justify-content: flex-start; }
.bell svg { width: 18px; height: 20px; }
.bell span { position: absolute; right: 0; top: 3px; width: 16px; height: 16px; border-radius: 3px; background: #1651b0; color: #fff; font: 700 11px/15px "Noto Sans", sans-serif; text-align: center; }
.help { gap: 4px; margin-left: 2px; }
.help svg { width: 18px; height: 18px; }
.caret { border: 4px solid transparent; border-top: 4px solid #333; border-bottom: 0; }
.me { gap: 5px; font-size: 14px; }
.me svg { width: 24px; height: 24px; }

.work { display: flex; flex: 1; }
.rail { display: flex; flex-direction: column; width: 40px; padding-bottom: 8px; border-top: 1px solid #ccc; border-right: 1px solid #ccc; background: #fafafa; }
.rail button { width: 39px; height: 34px; }
.rail svg { width: 20px; height: 20px; }
.rail .find { height: 16px; margin-top: auto; }
.rail .find svg { height: 16px; }
.main { display: flex; flex-direction: column; flex: 1; min-width: 0; }
.toolbar { display: flex; align-items: center; height: 36px; padding-left: 1px; white-space: nowrap; }
.tool { width: 34px; height: 34px; }
.toolbar svg { width: 20px; height: 20px; }
.sep { flex: none; width: 2px; height: 26px; margin: 0 1px; background: #ddd; }
.first { margin-left: 2px; }
.chev { width: 18px; height: 34px; }
.toolbar .chev svg { width: 12px; height: 8px; }
.sketch { width: 69px; gap: 4px; padding-right: 2px; }
.search { height: 31px; margin-left: 11px; padding: 0 10px; gap: 4px; border-radius: 3px; background: #ececec; color: #666; }
.search span { display: flex; gap: 1px; }
kbd { padding: 0 2px; border: 1px solid #aaa; border-radius: 2px; font: 12px/17px "Noto Sans CJK TC", sans-serif; }
kbd + kbd { padding: 0 4px; }

.body { display: flex; flex: 1; }
.panel { position: relative; display: flex; flex-direction: column; width: 206px; border: solid #ccc; border-width: 1px 1px 1px 0; }
.features { flex: 1; padding: 0 8px 0 5px; }
.phead { display: flex; align-items: center; height: 32px; }
.phead span { flex: 1; }
.phead button { width: 30px; }
.phead button:last-child { margin-right: 7px; }
.phead svg, .flyout svg { width: 20px; height: 20px; }
.filter { display: flex; align-items: center; height: 30px; padding-left: 5px; }
.filter svg { width: 16px; height: 16px; }
.filter input { width: 158px; height: 30px; margin-left: 13px; padding: 0 20px 0 6px; border: 1px solid #ccc; border-top-color: #aaa; border-radius: 3px; background: #fff; font: italic 13px/20px "Noto Sans CJK TC", sans-serif; color: #333; }
.filter input::placeholder { color: #999; opacity: 1; }
.row { display: flex; align-items: center; height: 26px; color: #555; }
.row svg { width: 16px; height: 16px; margin-right: 4px; }
.row .fold { width: 12px; height: 8px; margin-right: 6px; }
.kids { position: relative; padding-left: 20px; }
.kids::before { content: ""; position: absolute; left: 4px; top: 0; bottom: 0; width: 5px; border: solid #c4c4c4; border-width: 0 0 1px 1px; }
.bar { width: 190px; height: 7px; margin-top: 9px; background: #c0c0c0; }
.parts { height: 271px; margin-right: 5px; padding-left: 5px; border-top: 1px solid #ccc; }
.parts .part { padding-left: 20px; }
.flyout { position: absolute; left: 205px; top: 361px; width: 33px; height: 34px; border: 1px solid #ccc; border-left: 0; background: #fff; z-index: 2; }

.canvas { position: relative; flex: 1; min-width: 0; overflow: hidden; }
.model { position: absolute; left: calc(50% - 364px); top: 37px; width: 676px; height: 676px; }
.viewcube { position: absolute; right: 15px; top: 31px; width: 150px; height: 166px; overflow: visible; }
.shade { position: absolute; right: 21px; top: 167px; gap: 7px; }
.shade svg { width: 20px; height: 20px; }
.palette { position: absolute; right: 0; top: 312px; display: flex; flex-direction: column; border: 1px solid #ccc; border-right: 0; background: #fff; }
.palette button { width: 31px; height: 33px; }
.palette button + button { border-top: 1px solid #ccc; }
.palette svg { width: 20px; height: 20px; }
.measure { position: absolute; right: 11px; bottom: 7px; display: flex; gap: 17px; }
.measure svg { width: 18px; height: 16px; }

.doctabs { display: flex; height: 31px; background: #d0d0d0; border-bottom: 1px solid #ddd; }
.add { width: 32px; margin-right: 7px; }
.add svg { width: 16px; height: 16px; }
.dt { justify-content: flex-start; gap: 4px; width: 200px; height: 27px; margin-right: 2px; padding: 0 11px 2px; border-radius: 0 0 4px 4px; background: #e8e8e8; box-shadow: 0 1px 2px #aaa; color: #666; font-size: 14px; }
.dt svg { width: 18px; height: 18px; }
.dt.on { height: 28px; background: #fff; border-bottom: 2px solid #1651b0; color: #333; }

.shelf { display: flex; align-items: center; height: 55px; padding-right: 12px; }
.dl { display: flex; align-items: center; width: 233px; height: 43px; padding: 0 19px 2px 14px; border-right: 1px solid #ccc; }
.dl:first-child { width: 237px; padding-left: 19px; }
.file { width: 18px; height: 18px; margin-right: 12px; }
.dl a { flex: 1; font: 13px/18px "Noto Sans", "Noto Sans CJK TC", sans-serif; color: #3c4043; white-space: nowrap; }
.dl button svg { width: 10px; height: 6px; }
.all { width: 80px; height: 32px; margin-left: auto; border-color: #dadce0; color: #1a73e8; font-size: 12px; }
.sx { width: 12px; margin-left: 12px; }
.sx svg { width: 10px; height: 10px; }

.task { display: flex; height: 40px; background: linear-gradient(90deg, #21353f, #1f3543 45%, #1a2540 85%); color: #fff; }
.app { position: relative; width: 49px; height: 40px; }
.app svg { width: 24px; height: 24px; }
.app.on::after { content: ""; position: absolute; left: 5px; right: 4px; bottom: 0; height: 2px; background: #76b9ed; }
.app.wide { background: #4e616b; }
.app.wide::after { left: 0; right: 0; }
.app.multi::after { background: linear-gradient(90deg, #76b9ed 78%, #4f83a9 78%); }
.tray { display: flex; align-items: center; margin-left: auto; padding-right: 4px; font: 12px/18px "Noto Sans", "Noto Sans CJK TC", sans-serif; }
.tray svg { width: 16px; height: 16px; }
.tray > button { width: 16px; margin-right: 32px; }
.tray > button:nth-child(3) { margin-right: 14px; }
.tray > .ime { width: 15px; height: 15px; margin-right: 17px; background: #fff; color: #111; font-size: 10px; font-weight: 500; line-height: 15px; }
time { display: flex; flex-direction: column; align-items: center; }
.tray > .note { position: relative; margin: 0 19px 0 20px; }
.note span { position: absolute; left: 7px; top: 7px; width: 16px; height: 16px; border: 1px solid #999; border-radius: 50%; background: #333; font-size: 11px; line-height: 14px; text-align: center; }
.peek { width: 1px; height: 40px; background: #76808f; }
</style>
